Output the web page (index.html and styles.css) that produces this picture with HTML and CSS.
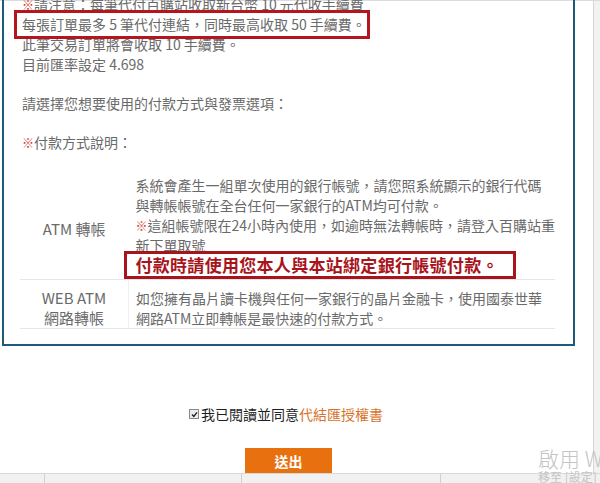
FILE: index.html
```html
<!DOCTYPE html>
<html lang="zh-Hant">
<head>
    <meta charset="UTF-8">
    <title>付款方式</title>
    <link rel="stylesheet" href="styles.css">
</head>
<body>
    <div class="window">
        <div class="main">
            <div class="frame">
                <p class="line first"><span class="ref">※</span>請注意：每筆代付百購站收取新台幣 10 元代收手續費</p>
                <p class="line boxed">每張訂單最多 5 筆代付連結，同時最高收取 50 手續費。</p>
                <p class="line">此筆交易訂單將會收取 10 手續費。</p>
                <p class="line">目前匯率設定 4.698</p>
                <p class="line spaced">請選擇您想要使用的付款方式與發票選項：</p>
                <p class="line spaced"><span class="ref">※</span>付款方式說明：</p>

                <table class="pay">
                    <tr class="pay-row atm">
                        <td class="pay-name">ATM 轉帳</td>
                        <td class="pay-desc">
                            <div>系統會產生一組單次使用的銀行帳號，請您照系統顯示的銀行代碼</div>
                            <div>與轉帳帳號在全台任何一家銀行的ATM均可付款。</div>
                            <div><span class="ref">※</span>這組帳號限在24小時內使用，如逾時無法轉帳時，請登入百購站重</div>
                            <div>新下單取號</div>
                            <div class="notice">付款時請使用您本人與本站綁定銀行帳號付款。</div>
                        </td>
                    </tr>
                    <tr class="pay-row web">
                        <td class="pay-name">WEB ATM<br>網路轉帳</td>
                        <td class="pay-desc">
                            如您擁有晶片讀卡機與任何一家銀行的晶片金融卡，使用國泰世華<br>
                            網路ATM立即轉帳是最快速的付款方式。
                        </td>
                    </tr>
                </table>
            </div>

            <div class="actions">
                <label class="agree">
                    <span class="check">
                        <svg width="7" height="7" viewBox="0 0 7 7"><path d="M1 3.6 L2.8 5.4 L6 1.4" fill="none" stroke="#222" stroke-width="1.4"/></svg>
                    </span>我已閱讀並同意<a class="agree-link">代結匯授權書</a>
                </label>
                <button class="submit">送出</button>
            </div>
        </div>
        <div class="scrollbar"></div>
    </div>
    <div class="statusbar">
        <span class="cell c1"></span>
        <span class="cell c2"></span>
        <span class="cell c3"></span>
    </div>

    <div class="watermark">
        <div class="wm-title">啟用 Windows</div>
        <div class="wm-sub">移至 [設定] 以啟用 Windows。</div>
    </div>
</body>
</html>
```

FILE: styles.css
```css
body, html {
    margin: 0;
    height: 100%;
    overflow: hidden;
    background-color: white;
    font-family: "Noto Sans CJK TC", "Noto Sans", sans-serif;
    color: #6a6a6a;
}

body {
    display: flex;
    flex-direction: column;
}

.window {
    display: flex;
    height: 473px;
    border-top: 1px solid #dcdcdc;
    box-sizing: border-box;
}

.main {
    width: 593px;
}

.scrollbar {
    flex: 1;
    background-color: #f2f2f2;
    border-left: 1px solid #d6d6d6;
}

.frame {
    margin-left: 2px;
    width: 573px;
    box-sizing: border-box;
    border: 2px solid #1e5b78;
    border-top: none;
    padding: 0 18px 15px 18px;
}

.line {
    margin: 0;
    font-size: 14px;
    line-height: 20px;
    white-space: nowrap;
}

.line.first {
    margin-top: -7px;
}

.line.spaced {
    margin-top: 19px;
}

.ref {
    color: #d0342c;
    font-size: 12px;
    line-height: 1;
}

.boxed {
    width: fit-content;
    border: 3px solid #b3161f;
    padding: 1px 1px 2px 5px;
    margin: -4px -4px -5px -8px;
    position: relative;
    background-color: white;
}

.pay {
    border-collapse: collapse;
    margin-top: 13px;
    width: 535px;
    margin-left: -2px;
    font-size: 14px;
    line-height: 20px;
}

.pay td {
    padding: 0;
    border-bottom: 1px solid #e6e6e6;
}

.pay-name {
    width: 109px;
    text-align: center;
    vertical-align: middle;
    font-size: 15px;
}

.pay-desc {
    padding-left: 7px !important;
    white-space: nowrap;
}

.atm td {
    padding-top: 10px;
}

.atm .pay-name {
    padding-top: 14px;
}

.web td {
    padding-top: 8px;
    height: 40px;
    vertical-align: top;
}

.web .pay-desc {
    border-left: 1px solid #f0f0f0;
}

.notice {
    width: fit-content;
    margin: -4px 0 0 -11px;
    padding: 0 14px 0 8px;
    border: 3px solid #a8141c;
    background-color: white;
    color: #a8141c;
    font-size: 17px;
    font-weight: bold;
    line-height: 22px;
    letter-spacing: 0.3px;
    position: relative;
}

.actions {
    margin-left: 2px;
    width: 573px;
    display: flex;
    flex-direction: column;
    align-items: center;
}

.agree {
    margin-top: 58px;
    font-size: 14px;
    line-height: 20px;
    color: #1f1f1f;
    display: flex;
    align-items: center;
    padding-right: 5px;
}

.check {
    width: 8px;
    height: 8px;
    border: 1px solid #8a8a8a;
    background-color: #ececec;
    margin-right: 2px;
    display: flex;
    align-items: center;
    justify-content: center;
}

.agree-link {
    color: #d8732a;
}

.submit {
    margin-top: 24px;
    width: 87px;
    height: 26px;
    border: none;
    background-color: #e8700f;
    color: white;
    font-family: "Noto Sans CJK TC", sans-serif;
    font-size: 14px;
    font-weight: bold;
    padding: 0;
}

.statusbar {
    flex: 1;
    display: flex;
    background-color: #f1f1f1;
    border-top: 1px solid #d9d9d9;
}

.cell {
    border-right: 1px solid #cfcfcf;
}

.c1 { width: 44px; }
.c2 { width: 196px; }
.c3 { width: 198px; }

.watermark {
    position: absolute;
    left: 538px;
    top: 446px;
    white-space: nowrap;
    color: #c4c4c4;
}

.wm-title {
    font-size: 21px;
    line-height: 24px;
    font-weight: 300;
}

.wm-sub {
    font-size: 12px;
    line-height: 14px;
}
```
